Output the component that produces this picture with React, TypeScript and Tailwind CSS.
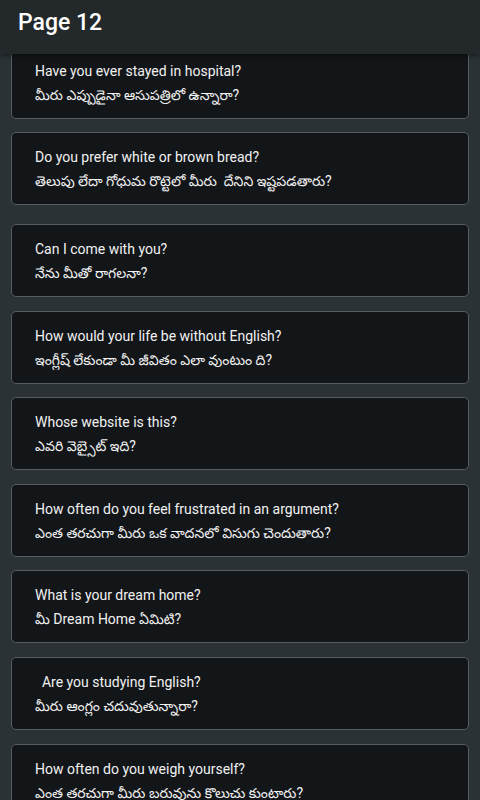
const phrases = [
  { en: 'Have you ever stayed in hospital?', te: 'మీరు ఎప్పుడైనా ఆసుపత్రిలో ఉన్నారా?', gap: 'mb-[13px]' },
  { en: 'Do you prefer white or brown bread?', te: 'తెలుపు లేదా గోధుమ రొట్టెలో మీరు  దేనిని ఇష్టపడతారు?', gap: 'mb-[19px]' },
  { en: 'Can I come with you?', te: 'నేను మీతో రాగలనా?', gap: 'mb-[14px]' },
  { en: 'How would your life be without English?', te: 'ఇంగ్లీష్ లేకుండా మీ జీవితం ఎలా వుంటుం ది?', gap: 'mb-[13px]' },
  { en: 'Whose website is this?', te: 'ఎవరి వెబ్సైట్ ఇది?', gap: 'mb-[14px]' },
  { en: 'How often do you feel frustrated in an argument?', te: 'ఎంత తరచుగా మీరు ఒక వాదనలో విసుగు చెందుతారు?', gap: 'mb-[13px]' },
  { en: 'What is your dream home?', te: 'మీ Dream Home ఏమిటి?', gap: 'mb-[14px]' },
  { en: '  Are you studying English?', te: 'మీరు ఆంగ్లం చదువుతున్నారా?', gap: 'mb-[14px]' },
  { en: 'How often do you weigh yourself?', te: 'ఎంత తరచుగా మీరు బరువును కొలుచు కుంటారు?', gap: 'mb-[14px]' },
];

export default function App() {
  return (
    <div
      className="flex h-[800px] w-[480px] flex-col overflow-hidden bg-[#2b3236]"
      style={{ fontFamily: "Roboto, 'Noto Sans Telugu', 'Noto Sans', sans-serif" }}
    >
      {/* top bar */}
      <header className="relative z-10 flex h-[54px] shrink-0 items-start bg-[#23282b] px-[18px] pt-[11px] shadow-[0_2px_5px_rgba(0,0,0,0.45)]">
        <h1 className="text-[23px] font-medium leading-none text-white">Page 12</h1>
      </header>

      {/* phrase list, scrolled a little */}
      <div className="-mt-[8px] px-[11px]">
        {phrases.map((p, i) => (
          <div
            key={i}
            className={`rounded-[5px] border border-[#565c60] bg-[#131619] pl-[23px] pr-4 pt-[14px] pb-[13px] ${p.gap}`}
          >
            <div className="whitespace-pre text-[14px] leading-[20px] text-[#f1f1f1]">{p.en}</div>
            <div className="mt-[4px] whitespace-pre text-[14px] leading-[20px] text-[#f1f1f1]">{p.te}</div>
          </div>
        ))}
      </div>
    </div>
  );
}
